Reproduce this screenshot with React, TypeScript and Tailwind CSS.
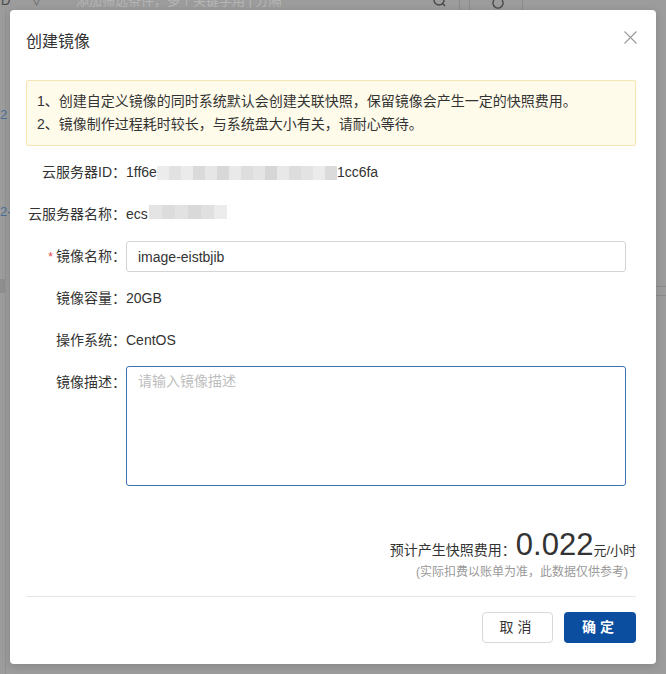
import { useState } from "react";

const font = { fontFamily: '"Liberation Sans", "Noto Sans CJK SC", sans-serif' };

// 打码的马赛克块
const idMask = ["#ececec", "#e2e2e2", "#ebebeb", "#dadada", "#e6e6e6", "#d8d8d8", "#e9e9e9", "#dedede", "#e4e4e4", "#d6d6d6", "#e8e8e8", "#dddddd", "#e3e3e3", "#ebebeb", "#dbdbdb"];
const nameMask = ["#e4e4e4", "#dcdcdc", "#e2e2e2", "#d9d9d9", "#e0e0e0", "#ececec"];

function Mask({ colors, w }: { colors: string[]; w: number }) {
  return (
    <span className="inline-flex h-[14px]">
      {colors.map((c, i) => (
        <span key={i} className="h-full" style={{ width: w, backgroundColor: c }} />
      ))}
    </span>
  );
}

function Row({ label, required, children, top }: { label: string; required?: boolean; children: React.ReactNode; top?: boolean }) {
  return (
    <div className={`flex ${top ? "items-start" : "items-center min-h-[31px]"}`}>
      <div className={`w-[100px] shrink-0 text-right text-[14px] text-[#333] ${top ? "pt-[5px] leading-[20px]" : ""}`}>
        {required && <span className="mr-[3px] text-[12px] text-[#e54545]">*</span>}
        {label}
      </div>
      <div className="min-w-0 flex-1 text-[14px] text-[#333]">{children}</div>
    </div>
  );
}

export default function App() {
  const [name, setName] = useState("image-eistbjib");
  const [desc, setDesc] = useState("");

  return (
    <div className="relative h-[674px] w-full overflow-hidden bg-[#9c9c9c]" style={font}>
      {/* 遮罩下的页面 */}
      <div className="flex h-[10px] items-center text-[13px] text-[#4a4a4a]">
        <span className="-mt-[8px] w-[30px] pl-[1px]">D</span>
        <span className="-mt-[8px] w-[46px] text-[#6a6a6a]">∨</span>
        <span className="-mt-[8px] w-[357px] text-[#b6b6b6]">添加筛选条件，多个关键字用 | 分隔</span>
        <svg width="14" height="10" viewBox="0 0 14 10" className="-mt-[2px]">
          <circle cx="6" cy="1" r="5" fill="none" stroke="#4a4a4a" strokeWidth="1.5" />
          <path d="M9.5 4.5 L12 7" stroke="#4a4a4a" strokeWidth="1.5" />
        </svg>
        <span className="ml-[12px] h-[10px] w-px bg-[#8a8a8a]" />
        <span className="ml-[9px] h-[10px] w-px bg-[#8a8a8a]" />
        <svg width="16" height="10" viewBox="0 0 16 10" className="ml-[20px]">
          <path d="M12 0 A5 5 0 1 1 4 0" fill="none" stroke="#4a4a4a" strokeWidth="1.5" />
        </svg>
        <span className="ml-[16px] h-[10px] w-px bg-[#8a8a8a]" />
      </div>
      <div className="flex h-[664px]">
        <div className="w-[6px] border-r border-[#929292]">
          <div className="mt-[98px] text-[13px] leading-[14px] text-[#4b6f96]">2</div>
          <div className="mt-[83px] text-[13px] leading-[14px] text-[#4b6f96]">2-</div>
          <div className="mt-[60px] h-[14px] bg-[#8e8e8e]" />
        </div>
        <div className="flex-1" />
        <div className="w-[10px]">
          <div className="mt-[276px] h-px bg-[#8a8a8a]" />
          <div className="mt-[8px] h-px bg-[#8a8a8a]" />
        </div>
      </div>

      {/* 弹窗 */}
      <div className="absolute left-[10px] top-[10px] flex h-[654px] w-[646px] flex-col rounded-[4px] bg-white pl-[16px] pr-[20px] shadow-[0_2px_8px_rgba(0,0,0,0.15)]">
        <div className="flex items-center pt-[22px]">
          <h2 className="flex-1 text-[16px] leading-[20px] text-[#333]">创建镜像</h2>
          <button className="-mr-[2px] -mt-[10px] flex h-[16px] w-[16px] items-center justify-center">
            <svg width="13" height="13" viewBox="0 0 13 13">
              <path d="M0.5 0.5 L12.5 12.5 M12.5 0.5 L0.5 12.5" stroke="#9a9a9a" strokeWidth="1.1" />
            </svg>
          </button>
        </div>

        <div className="mt-[28px] rounded-[2px] border border-[#f6e6b3] bg-[#fffbea] px-[10px] py-[9px] text-[14px] leading-[23px] text-[#333]">
          <p>1、创建自定义镜像的同时系统默认会创建关联快照，保留镜像会产生一定的快照费用。</p>
          <p>2、镜像制作过程耗时较长，与系统盘大小有关，请耐心等待。</p>
        </div>

        <div className="mt-[11px] flex flex-col gap-[11px]">
          <Row label="云服务器ID：">
            <span className="flex items-center">
              1ff6e
              <Mask colors={idMask} w={12} />
              1cc6fa
            </span>
          </Row>
          <Row label="云服务器名称：">
            <span className="flex items-center">
              ecs
              <span className="ml-[1px]">
                <Mask colors={nameMask} w={13} />
              </span>
            </span>
          </Row>
          <Row label="镜像名称：" required>
            <input
              value={name}
              onChange={(e) => setName(e.target.value)}
              className="h-[31px] w-[500px] rounded-[3px] border border-[#d4d4d4] px-[11px] text-[14px] text-[#333] outline-none"
              style={font}
            />
          </Row>
          <Row label="镜像容量：">20GB</Row>
          <Row label="操作系统：">CentOS</Row>
          <Row label="镜像描述：" top>
            <textarea
              value={desc}
              onChange={(e) => setDesc(e.target.value)}
              placeholder="请输入镜像描述"
              className="-mt-px block h-[120px] w-[500px] resize-none rounded-[3px] border border-[#3e72b0] px-[11px] py-[4px] text-[14px] leading-[20px] text-[#333] outline-none placeholder:text-[#bdbdbd]"
              style={font}
            />
          </Row>
        </div>

        <div className="mt-[41px] flex items-baseline justify-end text-[#333]">
          <span className="text-[14px]">预计产生快照费用：</span>
          <span className="text-[31px] leading-[36px] font-light">0.022</span>
          <span className="text-[13px]">元/小时</span>
        </div>
        <div className="pr-[8px] text-right text-[12px] leading-[18px] text-[#999]">(实际扣费以账单为准，此数据仅供参考)</div>

        <div className="mt-[15px] h-px bg-[#e6e6e6]" />

        <div className="mt-[15px] flex justify-end gap-[11px]">
          <button className="h-[31px] w-[71px] rounded-[4px] border border-[#d9d9d9] bg-white text-[14px] tracking-[4px] text-[#333]">
            取消
          </button>
          <button className="h-[31px] w-[72px] rounded-[4px] bg-[#0b4ea0] text-[14px] font-bold tracking-[4px] text-white">
            确定
          </button>
        </div>
      </div>
    </div>
  );
}
